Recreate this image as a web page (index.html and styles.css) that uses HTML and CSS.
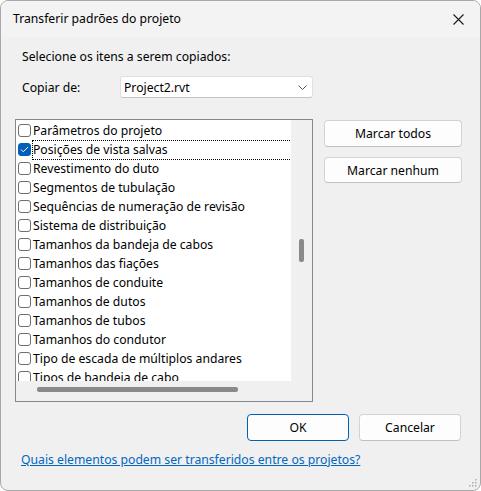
FILE: index.html
```html
<!DOCTYPE html>
<html lang="pt">
<head>
<meta charset="utf-8">
<title>Transferir padrões do projeto</title>
<link rel="stylesheet" href="styles.css">
</head>
<body>
<div class="window">
  <div class="titlebar">
    <span class="title">Transferir padrões do projeto</span>
    <svg class="close" width="11" height="11" viewBox="0 0 11 11"><path d="M0.5 0.5L10.5 10.5M10.5 0.5L0.5 10.5" stroke="#1a1a1a" stroke-width="1.1" fill="none"/></svg>
  </div>
  <div class="content">
    <div class="label-select">Selecione os itens a serem copiados:</div>
    <div class="copy-row">
      <span class="copy-label">Copiar de:</span>
      <div class="combo">
        <span>Project2.rvt</span>
        <svg class="chev" width="9" height="5" viewBox="0 0 9 5"><path d="M0.5 0.5L4.5 4.5L8.5 0.5" stroke="#555" stroke-width="1" fill="none"/></svg>
      </div>
    </div>
    <div class="main-row">
      <div class="panel">
        <div class="panel-top">
          <ul class="list">
            <li class="item"><span class="cb"></span><span class="txt">Parâmetros do projeto</span></li>
            <li class="item focus"><span class="cb checked"><svg width="9" height="7" viewBox="0 0 9 7"><path d="M1 3.5L3.3 5.8L8 1" stroke="#fff" stroke-width="1" fill="none"/></svg></span><span class="txt">Posições de vista salvas</span></li>
            <li class="item"><span class="cb"></span><span class="txt">Revestimento do duto</span></li>
            <li class="item"><span class="cb"></span><span class="txt">Segmentos de tubulação</span></li>
            <li class="item"><span class="cb"></span><span class="txt">Sequências de numeração de revisão</span></li>
            <li class="item"><span class="cb"></span><span class="txt">Sistema de distribuição</span></li>
            <li class="item"><span class="cb"></span><span class="txt">Tamanhos da bandeja de cabos</span></li>
            <li class="item"><span class="cb"></span><span class="txt">Tamanhos das fiações</span></li>
            <li class="item"><span class="cb"></span><span class="txt">Tamanhos de conduite</span></li>
            <li class="item"><span class="cb"></span><span class="txt">Tamanhos de dutos</span></li>
            <li class="item"><span class="cb"></span><span class="txt">Tamanhos de tubos</span></li>
            <li class="item"><span class="cb"></span><span class="txt">Tamanhos do condutor</span></li>
            <li class="item"><span class="cb"></span><span class="txt">Tipo de escada de múltiplos andares</span></li>
            <li class="item"><span class="cb"></span><span class="txt">Tipos de bandeja de cabo</span></li>
          </ul>
          <div class="vscroll"><div class="vthumb"></div></div>
        </div>
        <div class="panel-bottom">
          <div class="hscroll"><div class="hthumb"></div></div>
          <div class="corner"></div>
        </div>
      </div>
      <div class="side-buttons">
        <button class="btn btn-side">Marcar todos</button>
        <button class="btn btn-side2">Marcar nenhum</button>
      </div>
    </div>
    <div class="footer-buttons">
      <button class="btn btn-ok">OK</button>
      <button class="btn btn-cancel">Cancelar</button>
    </div>
    <a class="help-link" href="#">Quais elementos podem ser transferidos entre os projetos?</a>
  </div>
  <svg class="grip" width="8" height="8" viewBox="0 0 8 8">
    <rect x="6" y="0" width="1.5" height="1.5" fill="#aaa"/>
    <rect x="3" y="3" width="1.5" height="1.5" fill="#aaa"/>
    <rect x="6" y="3" width="1.5" height="1.5" fill="#aaa"/>
    <rect x="0" y="6" width="1.5" height="1.5" fill="#aaa"/>
    <rect x="3" y="6" width="1.5" height="1.5" fill="#aaa"/>
    <rect x="6" y="6" width="1.5" height="1.5" fill="#aaa"/>
  </svg>
</div>
</body>
</html>
```

FILE: styles.css
```css
* { box-sizing: border-box; }
html, body { margin: 0; padding: 0; background: #ffffff; }
body {
  font-family: "Noto Sans", "Open Sans", sans-serif;
  font-size: 12.2px;
  color: #000;
}
.window {
  position: relative;
  width: 481px;
  height: 491px;
  border: 1px solid #a8a8a8;
  border-radius: 8px;
  background: #f0f0f0;
  overflow: hidden;
}
.titlebar {
  height: 36px;
  background: #f3f3f3;
  display: flex;
  align-items: center;
  justify-content: space-between;
  padding: 0 16px 0 12px;
}
.title { line-height: 16px; }
.close { display: block; margin-top: 1px; }
.content {
  padding: 0 0 0 14px;
  display: flex;
  flex-direction: column;
}
.label-select {
  margin: 11px 0 0 7px;
  line-height: 18px;
}
.copy-row {
  display: flex;
  align-items: center;
  margin-top: 10px;
  height: 22px;
}
.copy-label { margin-left: 7px; width: 98px; }
.combo {
  width: 193px;
  height: 22px;
  background: #fff;
  border: 1px solid #e0e0e0;
  border-bottom-color: #c4c4c4;
  border-radius: 3px;
  display: flex;
  align-items: center;
  justify-content: space-between;
  padding: 0 5px 0 3px;
}
.chev { display: block; }
.main-row {
  display: flex;
  margin-top: 21px;
}
.panel {
  width: 298px;
  height: 283px;
  border: 1px solid #828790;
  background: #f0f0f0;
  display: flex;
  flex-direction: column;
}
.panel-top {
  display: flex;
  height: 261px;
}
.list {
  list-style: none;
  margin: 0;
  padding: 1px 0 0 0;
  width: 275px;
  height: 261px;
  background: #fff;
  overflow: hidden;
}
.item {
  height: 19px;
  display: flex;
  align-items: center;
  position: relative;
}
.cb {
  width: 13px;
  height: 13px;
  margin-left: 2px;
  border: 1px solid #6e6e6e;
  border-radius: 3px;
  background: #fff;
  flex: none;
  display: flex;
  align-items: center;
  justify-content: center;
}
.cb.checked {
  background: #005fb8;
  border-color: #005fb8;
}
.cb svg { display: block; }
.txt {
  margin-left: 2px;
  line-height: 17px;
  white-space: nowrap;
}
.focus::after {
  content: "";
  position: absolute;
  left: 16px;
  top: 0;
  width: 258px;
  height: 18px;
  border: 1px dotted #000;
}
.vscroll {
  flex: 1;
  position: relative;
}
.vthumb {
  position: absolute;
  left: 8px;
  top: 119px;
  width: 5px;
  height: 23px;
  background: #8a8a8a;
  border-radius: 2px;
}
.panel-bottom {
  display: flex;
  height: 20px;
}
.hscroll {
  width: 275px;
  position: relative;
}
.hthumb {
  position: absolute;
  left: 21px;
  top: 6px;
  width: 201px;
  height: 5px;
  background: #8a8a8a;
  border-radius: 2px;
}
.corner { flex: 1; }
.side-buttons {
  display: flex;
  flex-direction: column;
  margin-left: 11px;
  margin-top: 1px;
}
.btn {
  font-family: inherit;
  font-size: 12.2px;
  color: #000;
  background: #fdfdfd;
  border: 1px solid #d3d3d3;
  border-bottom-color: #c0c0c0;
  border-radius: 4px;
  padding: 0;
}
.btn-side { width: 138px; height: 27px; }
.btn-side2 { width: 138px; height: 26px; margin-top: 10px; }
.footer-buttons {
  display: flex;
  justify-content: flex-end;
  margin-top: 12px;
  padding-right: 19px;
  gap: 10px;
}
.btn-ok { width: 102px; height: 27px; border-color: #005fb8; }
.btn-cancel { width: 102px; height: 27px; }
.help-link {
  margin: 11px 0 0 6px;
  color: #0067c0;
  text-decoration: underline;
  line-height: 16px;
  align-self: flex-start;
}
.grip {
  position: absolute;
  right: 3px;
  bottom: 3px;
}
```
